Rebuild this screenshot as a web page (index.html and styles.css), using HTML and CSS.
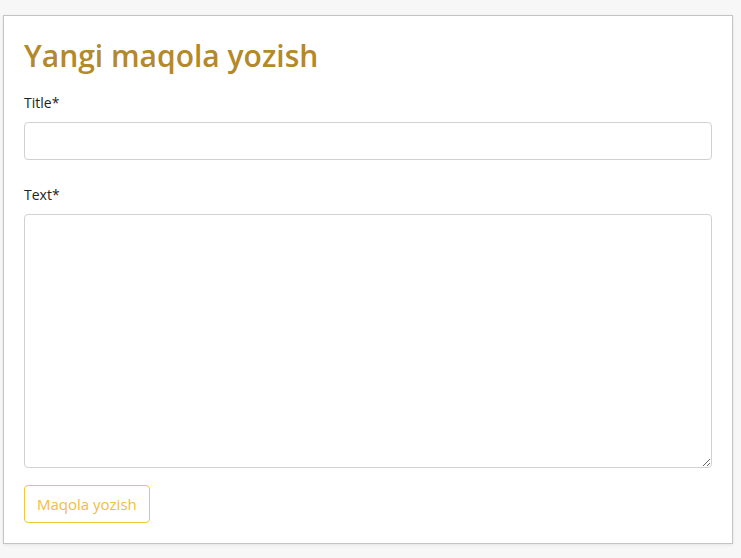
FILE: index.html
```html
<!DOCTYPE html>
<html lang="uz">
<head>
  <meta charset="UTF-8" />
  <meta name="viewport" content="width=device-width, initial-scale=1.0"/>
  <title>Yangi maqola yozish</title>
  <link rel="stylesheet" href="styles.css">
</head>
<body>

  <!-- Yangi maqola formasi -->
  <div class="card">
    <h2>Yangi maqola yozish</h2>
    <form>
      <div class="field">
        <label for="title">Title*</label>
        <input type="text" id="title" name="title">
      </div>
      <div class="field">
        <label for="text">Text*</label>
        <textarea id="text" name="text"></textarea>
      </div>
      <button type="button" class="submit-button">Maqola yozish</button>
    </form>
  </div>

</body>
</html>
```

FILE: styles.css
```css
body {
  margin: 0;
  font-family: 'Open Sans', sans-serif;
  background: #f7f7f7;
  padding: 15px 8px 15px 3px;
  color: #222;
}

.card {
  background: #ffffff;
  border: 1px solid #c4c4c4;
  box-shadow: 0 1px 3px rgba(0, 0, 0, 0.08);
  padding: 20px 20px 20px 20px;
}

h2 {
  margin: 0 0 17px;
  color: #b2892b;
  font-size: 30px;
  font-weight: 600;
  line-height: 40px;
}

form {
  display: flex;
  flex-direction: column;
  align-items: flex-start;
}

.field {
  display: flex;
  flex-direction: column;
  width: 100%;
  margin-bottom: 17px;
}

label {
  font-size: 14px;
  line-height: 20px;
  margin-bottom: 9px;
}

input,
textarea {
  box-sizing: border-box;
  width: 100%;
  border: 1px solid #d2d2d2;
  border-radius: 4px;
  font-family: 'Open Sans', sans-serif;
  font-size: 15px;
  background: #fff;
}

input {
  height: 38px;
  margin-bottom: 8px;
}

textarea {
  height: 254px;
  resize: vertical;
}

.submit-button {
  padding: 0 12px;
  height: 38px;
  font-size: 15px;
  font-family: 'Open Sans', sans-serif;
  color: #efbd45;
  background: #fff;
  border: 1px solid #f3c63f;
  border-radius: 4px;
  cursor: pointer;
}
```
